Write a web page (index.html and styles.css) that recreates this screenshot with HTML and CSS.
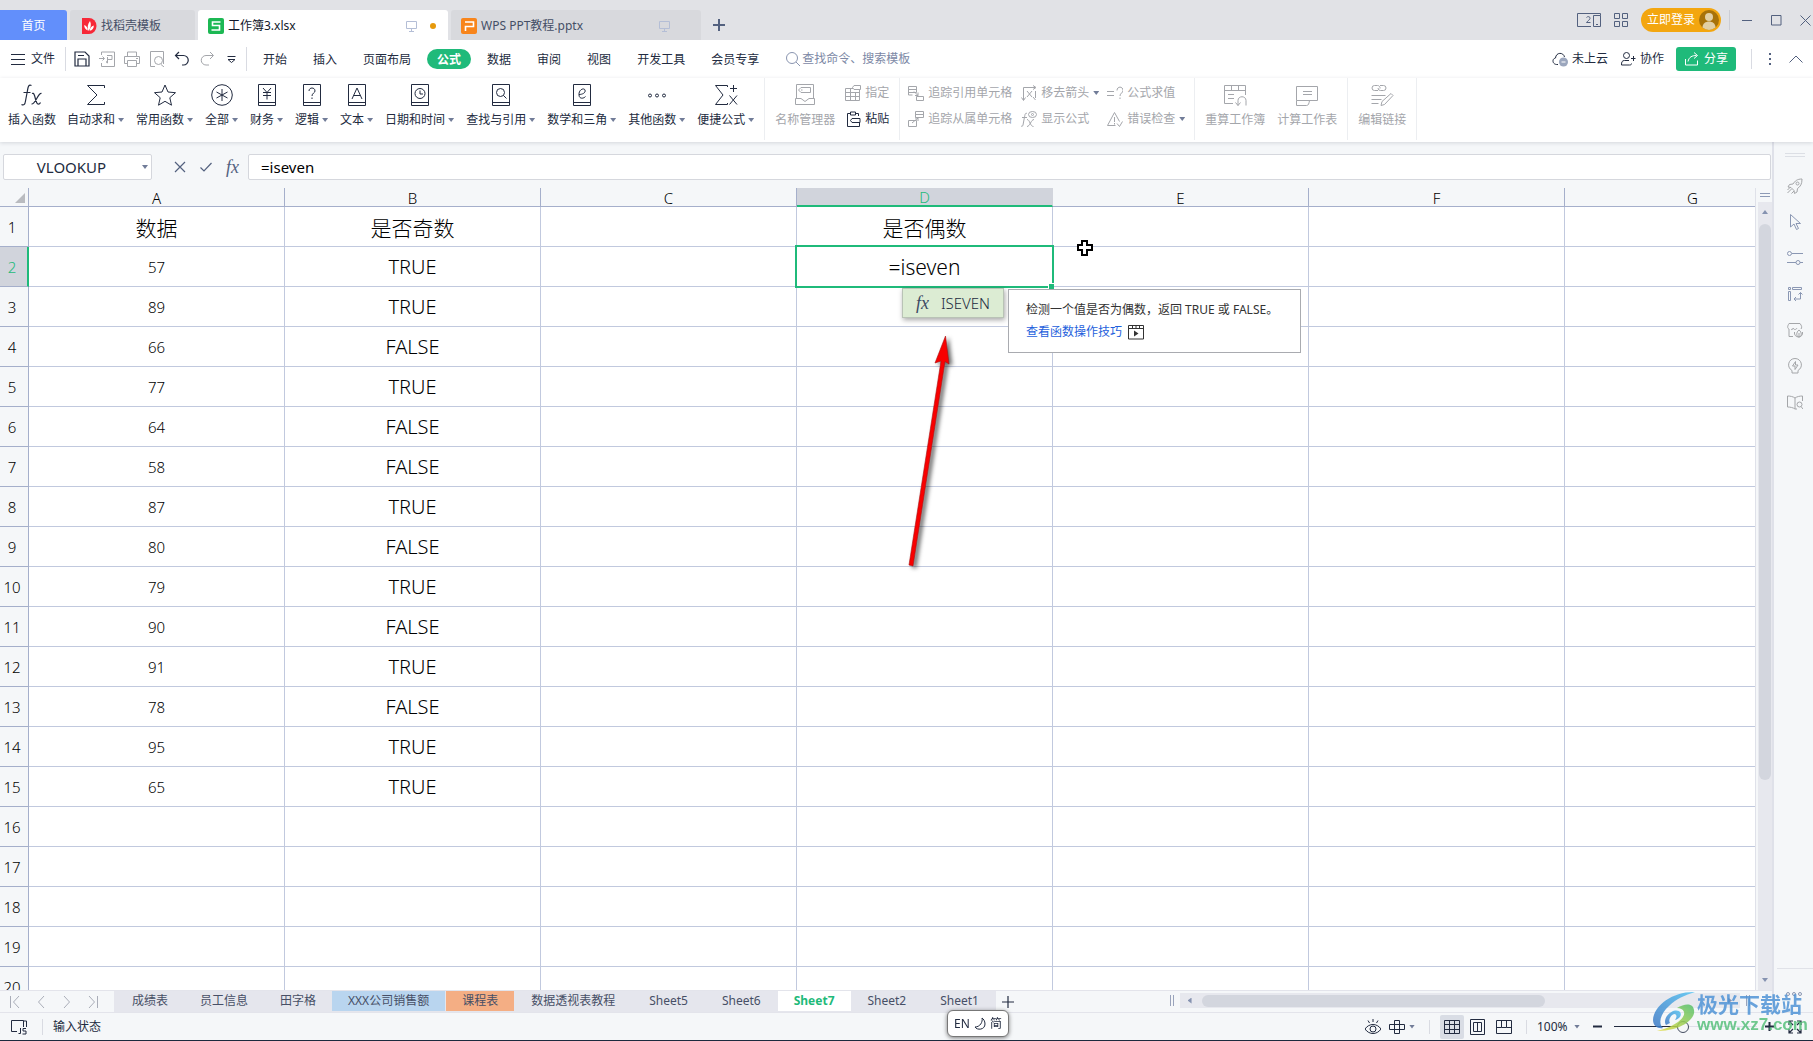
FILE: index.html
```html
<!DOCTYPE html>
<html lang="zh-CN">
<head>
<meta charset="utf-8">
<title>工作簿3.xlsx</title>
<link rel="stylesheet" href="styles.css">
</head>
<body>
<svg class="defs" aria-hidden="true">
  <symbol id="book" viewBox="0 0 24 24"><path d="M3.5 1.5h17v21h-17zM3.5 19.5h17"/></symbol>
  <symbol id="monitor" viewBox="0 0 12 12"><path d="M.5 1.5h10v7h-10zM5.5 8.5v3M3 11.500h5"/></symbol>
</svg>
<div class="app">
  <header class="titlebar">
    <nav class="doc-tabs">
      <button class="doc-tab home">首页</button>
      <button class="doc-tab docer">
        <svg class="i16" viewBox="0 0 16 16"><path class="fill-red" d="M1 0h7a7.500 8 0 0 1 0 16H1z"/><path class="fill-white" d="M7.500 13C6 10 6.500 6 9 3c1.500 3 1 7-1.500 10zM6.800 12.500C4.200 11.500 3.200 9.500 3.200 7c2.200.8 3.600 3 3.600 5.500zM8.600 12.800c.2-2.500 1.700-4.600 4.200-5.300.1 2.700-1.500 5-4.200 5.300z"/></svg>
        <span>找稻壳模板</span>
      </button>
      <button class="doc-tab file active">
        <svg class="i16" viewBox="0 0 16 16"><rect class="fill-green" width="16" height="16" rx="2"/><path class="logo-stroke" d="M12.500 4H4.500v3.500h7V12h-8"/></svg>
        <span>工作簿3.xlsx</span>
        <svg class="i12 push" viewBox="0 0 12 12"><use href="#monitor"/></svg>
        <i class="dirty"></i>
      </button>
      <button class="doc-tab file second">
        <svg class="i16" viewBox="0 0 16 16"><rect class="fill-orange" width="16" height="16" rx="2"/><path class="logo-stroke" d="M4 4h8.500v4.500H4.500V13"/></svg>
        <span>WPS PPT教程.pptx</span>
        <svg class="i12 push" viewBox="0 0 12 12"><use href="#monitor"/></svg>
      </button>
      <button class="new-tab" aria-label="新建"><svg class="i12" viewBox="0 0 12 12"><path d="M6 0v12M0 6h12"/></svg></button>
    </nav>
    <div class="window-tools">
      <button aria-label="多窗口"><svg width="24" height="14" viewBox="0 0 24 14"><path d="M14 13.500H.5V.5H14M16.500 2.500h7v11h-7zM14 .5h9.500v2M19 11.500h2"/><path d="M9.500 4.500c1-1.500 4-1 3.500 1 0 1-2 2-3.500 4h4"/></svg></button>
      <button aria-label="应用"><svg width="14" height="14" viewBox="0 0 14 14"><path d="M.5.5h5v5h-5zM8.500.5h5v5h-5zM.5 8.500h5v5h-5zM8.500 8.500h5v5h-5z"/></svg></button>
      <button class="login">立即登录
        <svg width="20" height="20" viewBox="0 0 20 20"><circle cx="10" cy="10" r="10" fill="#a87209"/><circle cx="10" cy="7" r="4" fill="#e2cfa4"/><path d="M3.500 17.500c0-8 13-8 13 0a10 10 0 0 1-13 0z" fill="#e2cfa4"/></svg>
      </button>
      <div class="window-buttons">
        <button aria-label="最小化"><svg class="i11" viewBox="0 0 11 11"><path d="M0 5.500h10"/></svg></button>
        <button aria-label="最大化"><svg class="i11" viewBox="0 0 11 11"><path d="M.5.5h9.500v9.500H.5z"/></svg></button>
        <button aria-label="关闭"><svg class="i11" viewBox="0 0 11 11"><path d="M.5.500l10 10M10.500.5l-10 10"/></svg></button>
      </div>
    </div>
  </header>

  <div class="menubar">
    <button class="file-menu"><svg width="14" height="12" viewBox="0 0 14 12"><path d="M0 1.500h14M0 6.500h14M0 11.500h14"/></svg>文件</button>
    <div class="quick">
      <button aria-label="保存"><svg class="i16" viewBox="0 0 16 16"><path class="bold" d="M1 1h10l4 4v10H1zM4 15V8h8v7M4 4.500h6"/></svg></button>
      <button aria-label="输出为PDF" class="off"><svg class="i16" viewBox="0 0 16 16"><path d="M2.500 4V1h13v14.500h-13V12M0 7.500h5M3.500 5.500l2 2-2 2M8 4.500h5v4H8.500M8.500 6v6c-1.500 0-1.500-2 0-2"/></svg></button>
      <button aria-label="打印" class="off"><svg class="i16" viewBox="0 0 16 16"><path d="M3.500 5V1h9v4M3 12.500H.5v-7h15v7H13M3.500 9.500h9v6h-9zM12 7.500h2"/></svg></button>
      <button aria-label="打印预览" class="off"><svg class="i16" viewBox="0 0 16 16"><path d="M6 15.500H1.500V.5h13V13M12 13.500l3 2.500"/><circle cx="9.500" cy="9.500" r="4"/></svg></button>
      <button aria-label="撤销"><svg class="i16" viewBox="0 0 16 16"><path class="bold" d="M5 1L1.500 4.500 5 8M2 4.500h7.500a4.700 4.700 0 0 1 0 9.500H8"/></svg></button>
      <button aria-label="恢复" class="off"><svg class="i16" viewBox="0 0 16 16"><path d="M11 1l3.500 3.500L11 8M14 4.500H7a4.700 4.700 0 0 0 0 9.500h3"/></svg></button>
      <button aria-label="更多"><svg class="i9" viewBox="0 0 9 9"><path d="M.5 1.500h8M1 4.500h7l-3.500 3z"/></svg></button>
    </div>
    <nav class="menus">
      <button>开始</button><button>插入</button><button>页面布局</button><button class="current">公式</button><button>数据</button><button>审阅</button><button>视图</button><button>开发工具</button><button>会员专享</button>
    </nav>
    <label class="search"><svg class="i16" viewBox="0 0 16 16"><circle cx="7" cy="7" r="5.500"/><path d="M11 11l4 4"/></svg><input type="text" aria-label="查找命令" placeholder="查找命令、搜索模板"></label>
    <div class="account">
      <button><svg class="i16" viewBox="0 0 16 16"><path d="M6 13.500H4.500C0 13 0 7.500 3.500 7 4 1 11.500 1 12.500 6"/><circle cx="11.500" cy="11" r="4.500" fill="#9ba6bd" stroke="none"/><path d="M9.500 11h4" stroke="#fff"/></svg>未上云</button>
      <button><svg class="i16" viewBox="0 0 16 16"><circle cx="6.500" cy="4.500" r="3"/><path d="M9 9.500H4.500C2 9.500 1.500 11 1.500 14h8c1.500 0 2-.5 2-1.500M11 7.500h4.500M13.500 5v5"/></svg>协作</button>
      <button class="share"><svg class="i16" viewBox="0 0 16 16"><path d="M1.500 8v6h12V9.500M4 10.500C5 6 8 4.500 12.500 4.500M10 1.500l3.500 3-3.500 3"/></svg>分享</button>
      <div class="more">
        <button aria-label="更多"><svg width="4" height="14" viewBox="0 0 4 14"><path class="dots" d="M1 1h2v2H1zM1 6h2v2H1zM1 11h2v2H1z"/></svg></button>
        <button aria-label="收起功能区"><svg width="14" height="8" viewBox="0 0 14 8"><path d="M.5 7.500L7 1l6.500 6.500"/></svg></button>
      </div>
    </div>
  </div>

  <div class="ribbon">
    <div class="group">
      <button class="big"><svg class="i24" viewBox="0 0 24 24"><path class="thick" d="M11.500 2.500C8 1 8 5 7.300 8.500L5.500 18c-.5 4-2 4.500-4 3.500M3.500 9.500h7M12 10.500c3.500-2 3 10 6 10.500 1 .2 2-.5 2.500-1.500M21.500 10.500c-3.500-1-6 11-10 10.500"/></svg><span>插入函数</span></button>
      <button class="big"><svg class="i24" viewBox="0 0 24 24"><path d="M20.500 5V2.500h-17L13 12 3.500 21.500h17V19"/></svg><span>自动求和<i class="caret"></i></span></button>
      <button class="big"><svg class="i24" viewBox="0 0 24 24"><path d="M12 2l3 7 7.500.7-5.700 5 1.700 7.500L12 18.300l-6.500 3.900 1.700-7.500-5.700-5L9 9z"/></svg><span>常用函数<i class="caret"></i></span></button>
      <button class="big"><svg class="i24" viewBox="0 0 24 24"><circle cx="12" cy="12" r="10.300"/><path d="M12 6v12M6.500 9l11 6M17.500 9l-11 6"/></svg><span>全部<i class="caret"></i></span></button>
      <button class="big"><svg class="i24" viewBox="0 0 24 24"><use href="#book"/><path d="M8 5l4 4.500L16 5M8 9.500h8M8 12.500h8M12 9.500v7"/></svg><span>财务<i class="caret"></i></span></button>
      <button class="big"><svg class="i24" viewBox="0 0 24 24"><use href="#book"/><path d="M9 8c0-4 6-4 6 0 0 2-3 2-3 5M12 14.500v1.500"/></svg><span>逻辑<i class="caret"></i></span></button>
      <button class="big"><svg class="i24" viewBox="0 0 24 24"><use href="#book"/><path d="M7 16l5-11 5 11M8.800 12.500h6.400"/></svg><span>文本<i class="caret"></i></span></button>
      <button class="big"><svg class="i24" viewBox="0 0 24 24"><use href="#book"/><circle cx="12" cy="10.500" r="5"/><path d="M12 7.500v3.500h3"/></svg><span>日期和时间<i class="caret"></i></span></button>
      <button class="big"><svg class="i24" viewBox="0 0 24 24"><use href="#book"/><circle cx="11.500" cy="9.500" r="4"/><path d="M14.500 12.500l3 3"/></svg><span>查找与引用<i class="caret"></i></span></button>
      <button class="big"><svg class="i24" viewBox="0 0 24 24"><use href="#book"/><path d="M9 11.500c3 0 7-1.500 6-4.500-1-2.500-6.500-.5-6 5 .3 4.500 5 3.500 6.500 1.500"/></svg><span>数学和三角<i class="caret"></i></span></button>
      <button class="big"><svg class="i24" viewBox="0 0 24 24"><circle cx="5" cy="12.500" r="1.500"/><circle cx="12" cy="12.500" r="1.500"/><circle cx="19" cy="12.500" r="1.500"/></svg><span>其他函数<i class="caret"></i></span></button>
      <button class="big"><svg class="i24" viewBox="0 0 24 24"><path d="M13.500 4V2.500h-12L9 12l-7.500 9.500h12V20M16 5.500h7M19.500 2v7M15.500 12.500l7.500 9M23 12.500l-7.500 9"/></svg><span>便捷公式<i class="caret"></i></span></button>
    </div>
    <div class="group off">
      <button class="big"><svg class="i24" viewBox="0 0 24 24"><path d="M3.500 15V1.500h17V15M2.500 15.500H8l4 3 4-3h5.500v6h-19zM8 4.500h9.500v5H8L5.500 7z"/><path d="M8 7h1.500"/></svg><span>名称管理器</span></button>
      <div class="stack">
        <button><svg class="i16" viewBox="0 0 16 16"><path d="M8 3.500H.5v12h14V5M.5 7.500h14M.5 11.500h14M5.500 3.500v12M10.500 7v8M9 .5h6.500v4H9L7.500 2.500z"/></svg>指定</button>
        <button class="on"><svg class="i16" viewBox="0 0 16 16"><path d="M5 2.500H2.500v13h12V12M10 2.500h3.500V5M5.500 1h5v3h-5zM7 7.500h8v4H7L5.500 9.500z"/></svg>粘贴</button>
      </div>
    </div>
    <div class="group audit off">
      <div class="stack">
        <button><svg class="i16" viewBox="0 0 16 16"><path d="M.5 1.500h8v6h-8zM.5 4.500h8M.5 7v3h4M8.500 11.500h7v4h-7zM6 6.500l4 4M10 7.500v3H7"/></svg>追踪引用单元格</button>
        <button><svg class="i16" viewBox="0 0 16 16"><path d="M7.500.5h8v6h-8zM7.500 3.500h8M.5 9.500h8v6h-8zM4 12l6-5M7 7h3v3"/></svg>追踪从属单元格</button>
      </div>
      <div class="stack">
        <button><svg class="i16" viewBox="0 0 16 16"><path d="M2.500 15V2.500H14M.5 12.500l2 3 2-3M12 .5l3 2-3 2M6 6l5 6M11 6l-5 6M14.500 6v7M12 12l2.500 3"/></svg>移去箭头<i class="caret"></i></button>
        <button><svg class="i16" viewBox="0 0 16 16"><path d="M6 2.500C4 1.500 4 4 3.500 6l-1.500 8c-.3 1.500-1 1.500-2 1M1 6.500h5M6 8.500c3 0 3 7 6.500 7M13 8.500c-3 0-4 7-7 7"/><ellipse cx="11.500" cy="3.500" rx="4" ry="3"/><circle cx="11.500" cy="3.500" r="1"/></svg>显示公式</button>
      </div>
      <div class="stack">
        <button><svg class="i16" viewBox="0 0 16 16"><path d="M0 6.500h7M0 10.500h7M10 5.500c0-4.500 6-4.500 6 0 0 2.500-3 2.500-3 5.500M13 12.500v1.500"/></svg>公式求值</button>
        <button><svg class="i16" viewBox="0 0 16 16"><path d="M8.500 14.500H.5L7.500 1.500l5 9M7.500 6v5M7.500 12v1.500M10 12.500l2.500 3 3-5"/></svg>错误检查<i class="caret"></i></button>
      </div>
    </div>
    <div class="group off">
      <button class="big"><svg class="i24" viewBox="0 0 24 24"><path d="M10 20.500H1.500v-18h21V12M1.500 7.500h21M8.500 2.500v5M15.500 2.500v5M5 11.500h6M5 15.500h6M15 22.500v-5c0-5 8-5 8 0v5M12.500 19.500l2.500 3 2.500-3"/></svg><span>重算工作簿</span></button>
      <button class="big"><svg class="i24" viewBox="0 0 24 24"><path d="M1.500 17.500v-14h21v14zM8 8.500h9M8 11.500h9M1.500 17.500v5h10c2 0 2.500-2 3-5"/></svg><span>计算工作表</span></button>
    </div>
    <div class="group off">
      <button class="big"><svg class="i24" viewBox="0 0 24 24"><path d="M8 7.500H4.500a2.500 2.500 0 0 1 0-5h3a2.500 2.500 0 0 1 2.500 3M10 2.500h3.500a2.500 2.500 0 0 1 0 5h-3A2.500 2.500 0 0 1 8 5M1.500 12.500h14M1.500 16.500h10M1.500 20.500h7M11 22.500l1-4 9-8 2 2-8.500 9z"/></svg><span>编辑链接</span></button>
    </div>
  </div>

  <div class="workspace">
    <main class="main">
      <div class="formula-bar">
        <div class="name-box"><input type="text" aria-label="名称框" value="VLOOKUP"><button aria-label="名称列表"><i class="caret"></i></button></div>
        <div class="formula-tools">
          <button aria-label="取消"><svg class="i12" viewBox="0 0 12 12"><path class="bold" d="M1 1l10 10M11 1L1 11"/></svg></button>
          <button aria-label="输入"><svg class="i12" viewBox="0 0 12 12"><path class="bold" d="M.5 6.500L4 10l7.500-8"/></svg></button>
          <button aria-label="插入函数" class="fx">fx</button>
        </div>
        <input class="formula" type="text" aria-label="编辑栏" value="=iseven">
      </div>

      <div class="sheet-row">
        <div class="grid">
          <table>
            <colgroup><col class="c-head"><col><col><col><col><col><col><col></colgroup>
            <thead><tr><th class="corner"><i></i></th><th>A</th><th>B</th><th>C</th><th class="sel">D</th><th>E</th><th>F</th><th>G</th></tr></thead>
            <tbody>
              <tr class="titles"><th>1</th><td>数据</td><td>是否奇数</td><td></td><td>是否偶数</td><td></td><td></td><td></td></tr>
              <tr><th class="sel">2</th><td class="num">57</td><td>TRUE</td><td></td>
                <td class="edit"><input type="text" aria-label="D2" value="=iseven">
                  <i class="handle"></i>
                  <button class="suggest"><em>fx</em><span>ISEVEN</span></button>
                  <div class="tip">
                    <p>检测一个值是否为偶数，返回 TRUE 或 FALSE。</p>
                    <a href="#">查看函数操作技巧<svg class="i16" viewBox="0 0 16 16"><path d="M.5 1.500h15v13.500H.5zM.5 4.500h15M4.500 1.500v3M8 1.500v3M11.500 1.500v3"/><path class="play" d="M6 6.500v6l4.500-3z"/></svg></a>
                  </div>
                  <svg class="pointer" width="16" height="16" viewBox="0 0 16 16"><path d="M5 1h5v4h5v5h-5v5H5v-5H1V5h4z"/></svg>
                  <svg class="arrow" width="60" height="250" viewBox="0 0 60 250"><path d="M42.500 6L32 33l6-2-32 204 4 1L42 31.500 46 34z"/></svg>
                </td><td></td><td></td><td></td></tr>
              <tr><th>3</th><td class="num">89</td><td>TRUE</td><td></td><td></td><td></td><td></td><td></td></tr>
              <tr><th>4</th><td class="num">66</td><td>FALSE</td><td></td><td></td><td></td><td></td><td></td></tr>
              <tr><th>5</th><td class="num">77</td><td>TRUE</td><td></td><td></td><td></td><td></td><td></td></tr>
              <tr><th>6</th><td class="num">64</td><td>FALSE</td><td></td><td></td><td></td><td></td><td></td></tr>
              <tr><th>7</th><td class="num">58</td><td>FALSE</td><td></td><td></td><td></td><td></td><td></td></tr>
              <tr><th>8</th><td class="num">87</td><td>TRUE</td><td></td><td></td><td></td><td></td><td></td></tr>
              <tr><th>9</th><td class="num">80</td><td>FALSE</td><td></td><td></td><td></td><td></td><td></td></tr>
              <tr><th>10</th><td class="num">79</td><td>TRUE</td><td></td><td></td><td></td><td></td><td></td></tr>
              <tr><th>11</th><td class="num">90</td><td>FALSE</td><td></td><td></td><td></td><td></td><td></td></tr>
              <tr><th>12</th><td class="num">91</td><td>TRUE</td><td></td><td></td><td></td><td></td><td></td></tr>
              <tr><th>13</th><td class="num">78</td><td>FALSE</td><td></td><td></td><td></td><td></td><td></td></tr>
              <tr><th>14</th><td class="num">95</td><td>TRUE</td><td></td><td></td><td></td><td></td><td></td></tr>
              <tr><th>15</th><td class="num">65</td><td>TRUE</td><td></td><td></td><td></td><td></td><td></td></tr>
              <tr><th>16</th><td></td><td></td><td></td><td></td><td></td><td></td><td></td></tr>
              <tr><th>17</th><td></td><td></td><td></td><td></td><td></td><td></td><td></td></tr>
              <tr><th>18</th><td></td><td></td><td></td><td></td><td></td><td></td><td></td></tr>
              <tr><th>19</th><td></td><td></td><td></td><td></td><td></td><td></td><td></td></tr>
              <tr><th>20</th><td></td><td></td><td></td><td></td><td></td><td></td><td></td></tr>
            </tbody>
          </table>
        </div>
        <div class="vscroll">
          <i class="split"></i>
          <div class="vtrack"><i class="tri up"></i><i class="vthumb"></i><i class="tri down"></i></div>
        </div>
      </div>

      <div class="tabbar">
        <div class="tab-nav">
          <button aria-label="第一张"><svg class="i12" viewBox="0 0 12 12"><path d="M1.500 0v12M10 0L4.500 6l5.500 6"/></svg></button>
          <button aria-label="上一张"><svg class="i12" viewBox="0 0 12 12"><path d="M9 0L3.500 6 9 12"/></svg></button>
          <button aria-label="下一张"><svg class="i12" viewBox="0 0 12 12"><path d="M3 0l5.500 6L3 12"/></svg></button>
          <button aria-label="最后一张"><svg class="i12" viewBox="0 0 12 12"><path d="M10.500 0v12M2 0l5.500 6L2 12"/></svg></button>
        </div>
        <nav class="sheets">
          <button>成绩表</button><button>员工信息</button><button>田字格</button><button class="blue">XXX公司销售额</button><button class="orange">课程表</button><button>数据透视表教程</button><button>Sheet5</button><button>Sheet6</button><button class="current">Sheet7</button><button>Sheet2</button><button>Sheet1</button>
        </nav>
        <button class="add-sheet" aria-label="新建工作表"><svg class="i12" viewBox="0 0 12 12"><path class="bold" d="M6 0v12M0 6h12"/></svg></button>
        <div class="hscroll"><i class="bars"></i><div class="htrack"><i class="tri left"></i><i class="hthumb"></i><i class="tri right"></i></div><i class="bars"></i></div>
      </div>
    </main>

    <aside class="side">
      <i class="grip"></i>
      <button aria-label="推荐" class="grey"><svg class="i16" viewBox="0 0 16 16"><path d="M15 1c-5 0-7 2-9 5L2.500 6.500 1 9l3 .5 3 3 .5 3L10 14l.5-3.500C13.500 8.500 15 6 15 1zM4.500 11l-4 4M3 9.500L.5 12M7 13l-2.500 2.500"/><circle cx="10.500" cy="5.500" r="1.500"/></svg></button>
      <button aria-label="选择"><svg class="i16" viewBox="0 0 16 16"><path d="M3.500.5v12.500L7 10l2.500 5.500 2-1L9 9.500h4.500z"/></svg></button>
      <button aria-label="属性"><svg class="i16" viewBox="0 0 16 16"><path d="M5 3.500h11M0 12.500h9M13 12.500h3"/><circle cx="2.500" cy="3.500" r="2"/><circle cx="11" cy="12.500" r="2"/></svg></button>
      <button aria-label="布局"><svg class="i16" viewBox="0 0 16 16"><path d="M1.500 1.500h2v2h-2zM5.500 1.500h9v2h-9zM1.500 5.500h2v9h-2zM13.500 6.500v6.500H7M11.500 8.500l2-2 2 2M9 11l-2 2 2 2"/></svg></button>
      <button aria-label="分析" class="grey"><svg class="i16" viewBox="0 0 16 16"><path d="M6 14.500H2V7C0 6 .5 4 2 1.500h11c2 2.500 2 4 1 5.500M4 7c1 1.500 2 0 2-1 1 2 3 2 4 0"/><path d="M12 8c-3 2-3 7 0 7s3-5 0-7zM7.500 10c-.5 3 1.500 5 4 5M15.500 10c.5 3-1.500 5-4 5M12 11v4"/></svg></button>
      <button aria-label="智能" class="grey"><svg class="i16" viewBox="0 0 16 16"><path d="M5 12.500C-1 9 1.500.5 8 .5S17 9 11 12.500V15H5zM8.500 3.500l-3 4.500H8v3.500L11 7H8.500z"/></svg></button>
      <button aria-label="帮助" class="grey"><svg class="i16" viewBox="0 0 16 16"><path d="M8 4C6 2.500 3 2 .5 2v11c2.500 0 5.500.5 7.500 2zM8 4c2-1.500 5-2 7.500-2v5M8 15h2"/><circle cx="12.500" cy="10.500" r="2.500"/><path d="M14 12.500l2 2.500"/></svg></button>
      <div class="side-more"><svg width="20" height="6" viewBox="0 0 20 6"><circle cx="3" cy="3" r="1.500"/><circle cx="9" cy="3" r="1.500"/><circle cx="15" cy="3" r="1.500"/></svg></div>
    </aside>
  </div>

  <footer class="status">
    <button aria-label="宏"><svg class="i16" viewBox="0 0 16 16"><path d="M6 12.500H.5v-11h12M12.500 1.500V8M12.500 2h3v6M9.500 9v5.500H7.500M15 9.500h-3v2.500h3v3h-3.500"/></svg></button>
    <span class="mode">输入状态</span>
    <div class="views">
      <button aria-label="护眼"><svg class="i16" viewBox="0 0 16 16"><path d="M0 10c4-6 12-6 16 0-4 6-12 6-16 0zM8 0v3M3 1.500l1.500 2.500M13 1.500L11.500 4"/><circle cx="8" cy="10" r="3"/></svg></button>
      <button aria-label="阅读模式" class="read"><svg class="i16" viewBox="0 0 16 16"><path d="M5.500 1.500h5v13h-5zM.5 5.500h15v5H.5zM5.500 5.500h5v5h-5z"/></svg><i class="caret"></i></button>
      <div class="view-modes">
        <button aria-label="普通视图" class="on"><svg class="i16" viewBox="0 0 16 16"><path d="M.5 1.500h15v13H.5zM.5 5.500h15M.5 10.500h15M5.500 1.500v13M10.500 1.500v13"/></svg></button>
        <button aria-label="页面布局"><svg class="i16" viewBox="0 0 16 16"><path d="M.5.500h14v15H.5zM3.500 3.500h8v9h-8zM7.500 3.500v9"/></svg></button>
        <button aria-label="分页预览"><svg class="i16" viewBox="0 0 16 16"><path d="M.5 1.500h15v13H.5zM5.500 1.500v7h5v-7M.5 8.500h5M10.500 8.500h5"/></svg></button>
      </div>
      <label class="zoom"><select aria-label="缩放"><option>100%</option></select><i class="caret"></i></label>
      <button aria-label="缩小" class="step"><svg class="i9" viewBox="0 0 9 9"><path class="heavy" d="M0 4.500h9"/></svg></button>
      <input type="range" aria-label="缩放滑块" min="0" max="100" value="48">
      <button aria-label="放大" class="step"><svg class="i9" viewBox="0 0 9 9"><path class="heavy" d="M0 4.500h9M4.500 0v9"/></svg></button>
      <button aria-label="全屏"><svg class="i14" viewBox="0 0 14 14"><path class="bold" d="M1 5V1h4M9 1h4v4M13 9v4H9M5 13H1V9M1 1l4 4M13 1L9 5M13 13L9 9M1 13l4-4"/></svg></button>
    </div>
  </footer>
</div>

<div class="ime"><span>EN</span><svg class="i14" viewBox="0 0 14 14"><path d="M9 1c1 4-2 9-7 9 2 3.500 10 3 10-3 0-3-1.500-5-3-6z"/></svg><span>简</span></div>

<div class="brand">
  <svg width="44" height="42" viewBox="0 0 44 42">
    <defs>
      <linearGradient id="bl" x1="0" y1="1" x2="1" y2="0"><stop offset="0" stop-color="#3b76c4"/><stop offset="1" stop-color="#55c4f2"/></linearGradient>
      <linearGradient id="gr" x1="0" y1="1" x2="1" y2="0"><stop offset="0" stop-color="#e6dc3c"/><stop offset="1" stop-color="#4fbf6c"/></linearGradient>
    </defs>
    <path fill="url(#bl)" d="M42 1C22 0 1 13 0 29c0 6 5 9 10 8-5-4-3-14 6-22 7-7 16-11 26-14z"/>
    <path fill="url(#bl)" d="M13 34c-4-7 6-17 13-14 4 3 1 8-4 9 2-3 2-5 0-6-4 0-7 6-5 9z"/>
    <path fill="url(#gr)" d="M24 17c8-5 16-5 17 2 2 9-13 21-37 21C18 37 33 28 31 21c-1-3-4-4-7-4z"/>
  </svg>
  <div><strong>极光下载站</strong><span>www.xz7.com</span></div>
</div>
</body>
</html>
```
FILE: styles.css
```css
* { box-sizing: border-box; }
:root {
  --ink: #222b40;
  --muted: #a4a6ab;
  --slate: #53617f;
  --green: #1fba7a;
  --panel: #f5f7f9;
  --line: #c1c9de;
  --head-line: #a5afcb;
}
body {
  margin: 0;
  font: 12px/16px "Noto Sans", "Noto Sans CJK SC", sans-serif;
  color: var(--ink);
  background: var(--panel);
  overflow: hidden;
}
button, input, select { font: inherit; color: inherit; margin: 0; padding: 0; border: 0; background: none; outline: 0; }
button { display: flex; align-items: center; justify-content: center; white-space: nowrap; }
i, em { font-style: normal; }
svg { fill: none; stroke: currentColor; flex: none; display: block; }
.defs { position: absolute; width: 0; height: 0; }
.bold { stroke-width: 1.2; }
.thick { stroke-width: 1.2; }
.heavy { stroke-width: 2; }
.i9 { width: 9px; height: 9px; }
.i11 { width: 11px; height: 11px; }
.i12 { width: 12px; height: 12px; }
.i14 { width: 14px; height: 14px; }
.i16 { width: 16px; height: 16px; }
.i24 { width: 24px; height: 24px; }
.caret { width: 6px; height: 4px; background: #717c98; clip-path: polygon(0 0, 100% 0, 50% 100%); flex: none; }
.app { display: flex; flex-direction: column; height: 100vh; border-bottom: 1px solid #1c2a3e; }

/* title bar */
.titlebar { display: flex; justify-content: space-between; height: 40px; background: #e1e2e6; color: #454f66; flex: none; }
.doc-tabs { display: flex; align-items: flex-end; gap: 3px; }
.doc-tab { height: 30px; background: #d8d9dd; border-radius: 3px 3px 0 0; justify-content: flex-start; gap: 4px; padding: 2px 11px 0; }
.doc-tab.home { width: 67px; padding: 2px 12px 0 0; padding-right: 0; justify-content: center; background: #628ffb; color: #fff; border-radius: 0 3px 0 0; }
.doc-tab.docer { width: 125px; }
.doc-tab.file { width: 250px; padding: 2px 12px 0 10px; }
.doc-tab.active { background: #fff; color: #10182a; }
.push { margin-left: auto; color: #b4bed6; }
.second .push { margin-right: 18px; }
.dirty { width: 6px; height: 6px; border-radius: 50%; background: #e6990c; margin-left: 8px; }
.fill-red { fill: #f72837; stroke: none; }
.fill-white { fill: #fff; stroke: none; }
.fill-green { fill: #1cb853; stroke: none; }
.fill-orange { fill: #f8851b; stroke: none; }
.logo-stroke { stroke: #fff; stroke-width: 1.6; }
.new-tab { height: 30px; width: 30px; color: var(--slate); }
.new-tab svg { stroke-width: 2; }
.window-tools { display: flex; align-items: center; gap: 13px; padding-right: 2px; color: var(--slate); }
.login { height: 24px; border-radius: 12px; background: #f3a60f; color: #fff; gap: 4px; padding: 0 2px 0 6px; }
.login svg { stroke: none; }
.window-buttons { display: flex; gap: 18px; border-left: 1px solid #cbcdd4; height: 20px; align-items: center; padding-left: 12px; margin-left: -5px; }

/* menu row */
.menubar { display: flex; align-items: center; height: 38px; background: #fff; padding-left: 11px; flex: none; }
.file-menu { gap: 6px; padding-right: 10px; height: 24px; border-right: 1px solid #d9dbe2; }
.quick { display: flex; align-items: center; gap: 9px; padding: 0 10px 0 8px; height: 24px; border-right: 1px solid #d9dbe2; }
.quick button:last-child { margin-left: 3px; }
.off { color: var(--muted); }
.on { color: var(--ink); }
.menus { display: flex; gap: 6px; padding-left: 6px; }
.menus button { height: 20px; padding: 1px 10px 0; border-radius: 10px; }
.menus .current { background: var(--green); color: #fff; font-weight: bold; }
.search { display: flex; align-items: center; gap: 1px; margin-left: 16px; color: #8a95b0; }
.search input { width: 120px; }
.search input::placeholder { color: #7c88a5; opacity: 1; }
.account { display: flex; align-items: center; gap: 12px; margin-left: auto; padding-right: 10px; }
.account button { gap: 4px; }
.account .share { width: 60px; height: 24px; border-radius: 3px; background: var(--green); color: #fff; }
.more { display: flex; align-items: center; gap: 17px; height: 20px; border-left: 1px solid #d9dbe2; padding-left: 16px; margin-left: 3px; color: var(--slate); }
.dots { fill: currentColor; stroke: none; }

/* ribbon */
.ribbon { display: flex; height: 64px; background: #fff; flex: none; padding-left: 8px; box-shadow: 0 1px 4px rgba(40, 50, 70, .16); position: relative; z-index: 1; }
.group { display: flex; gap: 12px; border-right: 1px solid #eceef1; padding: 4px 10px 0; height: 62px; }
.group:first-child { padding-left: 0; }
.group:first-child .big:first-child { margin-right: -1px; }
.big { flex-direction: column; justify-content: flex-start; gap: 5px; height: 46px; margin-top: 1px; }
.big span { display: flex; align-items: center; gap: 3px; }
.stack { display: flex; flex-direction: column; gap: 4px; margin-left: -2px; }
.stack button { height: 22px; gap: 4px; justify-content: flex-start; }
.group .stack + .stack { margin-left: -3px; }
.group .stack + .stack + .stack { margin-left: -4px; }
.audit { padding-right: 9px; }

/* workspace */
.workspace { display: flex; flex: 1; min-height: 0; }
.main { flex: 1; min-width: 0; display: flex; flex-direction: column; }
.formula-bar { display: flex; align-items: center; height: 46px; padding: 4px 1px 0 3px; flex: none; }
.name-box { display: flex; width: 149px; height: 26px; border: 1px solid #d5d7dd; border-radius: 2px; background: #fff; }
.name-box input { flex: 1; min-width: 0; text-align: center; font-size: 15px; }
.name-box button { width: 12px; }
.formula-tools { display: flex; align-items: center; gap: 14px; padding: 0 9px 0 22px; width: 96px; color: var(--slate); }
.formula-tools .fx { font: italic 18px/20px "Liberation Serif", serif; }
.formula { flex: 1; min-width: 0; height: 26px; border: 1px solid #d5d7dd; border-radius: 2px; background: #fff; padding: 0 12px; font-size: 15px; color: #000; }

/* grid */
.sheet-row { display: flex; flex: 1; min-height: 0; }
.grid { flex: 1; min-width: 0; overflow: hidden; background: #fff; }
table { table-layout: fixed; border-collapse: separate; border-spacing: 0; width: 1821px; color: #000; }
col { width: 256px; }
.c-head { width: 29px; }
th, td { padding: 0; text-align: center; font-weight: 300; }
td { height: 40px; border-right: 1px solid var(--line); border-bottom: 1px solid var(--line); font: 300 20px/24px "Noto Sans", "Noto Sans CJK SC", sans-serif; }
td.num { font-size: 15px; }
.titles td { font-size: 21px; padding-top: 2px; }
th { background: var(--panel); font-size: 15px; line-height: 16px; }
thead th { height: 19px; padding-top: 2px; border-bottom: 1px solid var(--head-line); border-right: 1px solid var(--head-line); }
tbody th { border-right: 1px solid var(--head-line); border-bottom: 1px solid var(--head-line); padding-right: 4px; }
thead .sel { background: #d1d4dc; color: var(--green); border-bottom: 2px solid var(--green); border-right-color: #d1d4dc; padding-top: 1px; }
tbody .sel { background: #d1d4dc; color: var(--green); border-right: 2px solid var(--green); padding-right: 3px; }
.corner i { display: block; width: 10px; height: 10px; margin-left: 15px; background: #b9bbc0; clip-path: polygon(100% 0, 100% 100%, 0 100%); }
.edit { position: relative; }
.edit > input { position: absolute; top: -2px; left: -2px; width: 259px; height: 43px; border: 2px solid var(--green); text-align: center; background: #fff; font-size: 21px; }
.handle { position: absolute; right: -2px; bottom: -3px; width: 6px; height: 6px; background: var(--green); border: solid #fff; border-width: 1px 0 0 1px; }
.suggest { position: absolute; left: 105px; top: 41px; width: 102px; height: 30px; border: 1px solid #b9c3b6; background: #dcecd3; box-shadow: 1px 2px 5px rgba(0, 0, 0, .35); font-size: 15px; gap: 12px; color: var(--ink); }
.suggest em { font: italic 18px/20px "Liberation Serif", serif; color: #3c4a63; }
.tip { position: absolute; left: 211px; top: 42px; z-index: 2; width: 293px; height: 64px; padding: 11px 17px; border: 1px solid #a9abb0; background: #fff; text-align: left; font: 12px/18px "Noto Sans", "Noto Sans CJK SC", sans-serif; white-space: nowrap; color: #333; }
.tip p { margin: 0 0 4px; }
.tip a { display: flex; align-items: center; gap: 6px; color: #1e5fdc; text-decoration: none; }
.tip svg { color: #333; }
.play { fill: #333; stroke: none; }
.pointer { position: absolute; left: 280px; top: -7px; }
.pointer path { fill: #fff; stroke: #000; stroke-width: 2; }
.arrow { position: absolute; left: 106px; top: 83px; overflow: visible; }
.arrow path { fill: #f80000; stroke: #a11; stroke-width: .6; filter: drop-shadow(3px 2px 2px rgba(0, 0, 0, .6)); }

.vscroll { width: 17px; border-left: 1px solid #dfe1e9; padding-left: 2px; display: flex; flex-direction: column; }
.split { height: 4px; width: 10px; margin: 5px 0 5px 2px; border: solid #8d9ab6; border-width: 1px 0; }
.vtrack { flex: 1; background: #e7e8ee; width: 14px; display: flex; flex-direction: column; align-items: center; padding: 8px 0; }
.vthumb { width: 12px; flex: 0 0 72%; margin: 10px 0 auto; border-radius: 6px; background: #d3d6de; }
.tri { background: #8592b0; flex: none; }
.up, .down { width: 6px; height: 4px; }
.up { clip-path: polygon(50% 0, 100% 100%, 0 100%); }
.down { clip-path: polygon(0 0, 100% 0, 50% 100%); }
.left, .right { width: 4px; height: 6px; }
.left { clip-path: polygon(100% 0, 100% 100%, 0 50%); }
.right { clip-path: polygon(0 0, 0 100%, 100% 50%); }

/* sheet tabs */
.tabbar { display: flex; height: 23px; border: solid #e3e4eb; border-width: 1px 0; flex: none; }
.tab-nav { display: flex; gap: 14px; padding-left: 9px; width: 114px; color: #a9adb8; }
.sheets { display: flex; background: #e5e6ed; color: #474f66; padding-left: 2px; }
.sheets button { height: 20px; padding: 0 17px; }
.sheets button:nth-child(-n+5) { padding: 0 16px; }
.sheets .blue { background: #b9d5ef; }
.sheets .orange { background: #f4ae84; margin-left: 1px; }
.sheets .current { background: #fff; color: var(--green); font-weight: bold; padding: 0 16px; }
.add-sheet { width: 24px; }
.hscroll { display: flex; align-items: center; gap: 6px; margin-left: auto; width: 34%; padding: 0 22px 2px 0; }
.bars { width: 4px; height: 11px; border: solid #99a3bb; border-width: 0 1px; flex: none; }
.htrack { flex: 1; height: 15px; background: #e7e8ee; display: flex; align-items: center; padding: 0 8px; }
.hthumb { width: 63%; height: 12px; border-radius: 6px; background: #d3d6de; margin: 0 auto 0 10px; }

/* side panel */
.side { width: 41px; border-left: 2px solid #dfe1e9; display: flex; flex-direction: column; align-items: center; color: #8a97b3; padding-left: 3px; border-bottom: 1px solid #e3e4eb; }
.side .grey { color: #a4a6a9; }
.side button { width: 24px; height: 36px; }
.grip { width: 20px; height: 4px; margin: 11px 0; border: solid #dcdfe5; border-width: 1px 0; flex: none; }
.side-more { margin-top: auto; border-top: 1px solid #e0e2e8; height: 44px; width: 100%; display: flex; align-items: center; justify-content: center; padding-top: 6px; }

/* status bar */
.status { display: flex; align-items: center; height: 27px; flex: none; padding: 0 11px; }
.mode { border-left: 1px solid #d9dbe2; margin-left: 15px; padding-left: 10px; }
.views { display: flex; align-items: center; gap: 8px; margin-left: auto; }
.read { gap: 4px; }
.view-modes { display: flex; align-items: center; gap: 2px; border: solid #d9dbe2; border-width: 0 1px; padding: 0 10px; height: 14px; margin-left: 6px; }
.view-modes button { width: 24px; height: 24px; }
.view-modes .on { background: #d9dde5; border-radius: 2px; }
.zoom { display: flex; align-items: center; gap: 4px; padding: 0 5px 0 2px; }
.zoom select { appearance: none; width: 33px; }
.views input[type=range] { appearance: none; width: 143px; height: 14px; background: linear-gradient(90deg, var(--ink) 48%, #dcdfe8 48%) center / 100% 1px no-repeat; margin: 0 0 0 4px; }
input[type=range]::-webkit-slider-thumb { appearance: none; width: 12px; height: 12px; border: 1px solid #444d60; border-radius: 50%; background: #f5f7f9; }
.views > button:last-child { margin-left: 6px; }

/* overlays */
.ime { position: fixed; left: 947px; bottom: 4px; width: 62px; height: 27px; display: flex; align-items: center; justify-content: center; gap: 3px; background: #fff; border: 1px solid #777; border-radius: 6px; box-shadow: 0 1px 4px rgba(0, 0, 0, .5); }
.brand { position: fixed; right: 10px; bottom: 7px; display: flex; opacity: .85; align-items: center; }
.brand svg { stroke: none; }
.brand div { display: flex; flex-direction: column; width: 106px; }
.brand strong { font: bold 21px/26px "Noto Sans CJK SC", sans-serif; color: #4f93d6; }
.brand span { font: bold 17px/18px "Liberation Sans", sans-serif; color: #58c07c; }
```
